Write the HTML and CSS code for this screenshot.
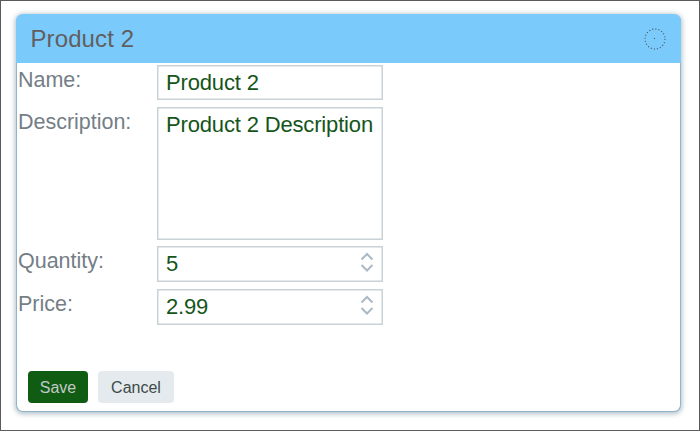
FILE: index.html
```html
<!DOCTYPE html>
<html lang="en">
<head>
<meta charset="utf-8">
<title>Product 2</title>
<link rel="stylesheet" href="styles.css">
</head>
<body>
<main class="window">
  <header class="window-header">
    <h1>Product 2</h1>
    <svg class="close" width="22" height="22" viewBox="0 0 22 22"><circle cx="11" cy="11" r="10" fill="none" stroke="#4b565f" stroke-width="1.1" stroke-dasharray="1.1 2.04"/><rect x="10" y="10" width="1" height="1" fill="#4b565f"/></svg>
  </header>
  <section class="form">
    <div class="label">Name:</div>
    <div class="field">Product 2</div>
    <div class="label">Description:</div>
    <div class="field">Product 2 Description</div>
    <div class="label">Quantity:</div>
    <div class="field">5<svg class="spin" width="14" height="22" viewBox="0 0 14 22"><path d="M1.5 7.5 7 2l5.5 5.5M1.5 13 7 18.5l5.5-5.5"/></svg></div>
    <div class="label">Price:</div>
    <div class="field">2.99<svg class="spin" width="14" height="22" viewBox="0 0 14 22"><path d="M1.5 7.5 7 2l5.5 5.5M1.5 13 7 18.5l5.5-5.5"/></svg></div>
  </section>
  <footer class="actions">
    <button class="btn save" type="button">Save</button>
    <button class="btn cancel" type="button">Cancel</button>
  </footer>
</main>
</body>
</html>
```
FILE: styles.css
```css
* { box-sizing: border-box; }
body {
  margin: 0;
  height: 431px;
  padding: 13px 18px 17px 15px;
  border: 1px solid #5b5b5b;
  background: #fff;
  font-family: "Liberation Sans", Arial, sans-serif;
}
.window {
  height: 398px;
  border: 1px solid #8fb4cc;
  border-top: 0;
  border-radius: 7px;
  box-shadow: 0 1px 5px 1px rgba(110, 140, 155, .55);
  background: #fff;
}
.window-header {
  display: flex;
  justify-content: space-between;
  height: 49px;
  margin: 0 -1px;
  padding: 0 15px 0 14.5px;
  border-radius: 7px 7px 0 0;
  background: #7acafb;
}
h1 {
  margin: 0;
  font-size: 24px;
  line-height: 50px;
  font-weight: 400;
  letter-spacing: .1px;
  color: #625e60;
}
.close { margin-top: 14px; }
.form {
  display: grid;
  grid-template-columns: 139px 226px;
  grid-template-rows: 35px 133px 36px 36px;
  row-gap: 6.5px;
  padding: 2px 0 0 1px;
}
.label {
  font-size: 21.5px;
  line-height: 30px;
  letter-spacing: -.02px;
  color: #747e86;
}
.field {
  display: flex;
  justify-content: space-between;
  padding: 1px 8px 0 8px;
  border: 1px solid #c8d2d7;
  box-shadow: inset 0 0 0 .5px #c8d2d7;
  font-size: 22px;
  line-height: 32px;
  letter-spacing: -.16px;
  color: #15551b;
  white-space: nowrap;
}
.spin {
  margin-top: 4px;
  fill: none;
  stroke: #abb9c4;
  stroke-width: 2;
}
.actions {
  display: flex;
  gap: 10px;
  padding: 46.5px 0 0 11px;
}
.btn {
  height: 32px;
  padding: 1px 0 0;
  border: 0;
  border-radius: 4px;
  font: 16px/31px "Liberation Sans", Arial, sans-serif;
}
.save { width: 60px; background: #105c12; color: #c3c9c8; }
.cancel { width: 76px; background: #e4eaed; color: #3d4b49; }
```
